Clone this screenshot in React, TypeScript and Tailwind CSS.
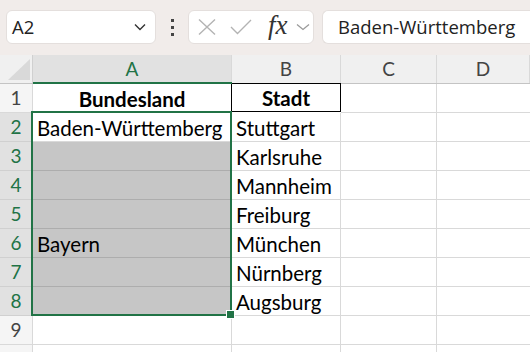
const cols = [
  { key: "A", w: "w-[199px]" },
  { key: "B", w: "w-[109px]" },
  { key: "C", w: "w-[96px]" },
  { key: "D", w: "flex-1" },
];

const rows: { n: number; a?: string; b?: string }[] = [
  { n: 1, a: "Bundesland", b: "Stadt" },
  { n: 2, a: "Baden-Württemberg", b: "Stuttgart" },
  { n: 3, b: "Karlsruhe" },
  { n: 4, b: "Mannheim" },
  { n: 5, b: "Freiburg" },
  { n: 6, a: "Bayern", b: "München" },
  { n: 7, b: "Nürnberg" },
  { n: 8, b: "Augsburg" },
  { n: 9 },
  { n: 10 },
];

const headFont = "font-['Lato','Liberation_Sans',sans-serif] text-[19px]";
const cellFont = "font-['Lato','Liberation_Sans',sans-serif] text-[20.5px] leading-[24px]";

function Toolbar() {
  return (
    <div className="h-[55px] bg-[#f1ecea] flex items-start pt-[10px] pl-[6px] font-['Open_Sans','Noto_Sans',sans-serif]">
      <div className="w-[150px] h-[34px] bg-white rounded-[6px] border border-[#e4dfdd] flex items-center justify-between pl-[5px] pr-[9px]">
        <span className="text-[18.5px] text-[#222]">A2</span>
        <svg viewBox="0 0 12 8" className="w-[12px] h-[8px]" fill="none" stroke="#333" strokeWidth={1.4}>
          <path d="M1 1.5l5 5 5-5" />
        </svg>
      </div>
      <div className="w-[32px] h-[34px] flex flex-col items-center justify-center gap-[4px]">
        <span className="w-[3px] h-[3px] bg-[#444]" />
        <span className="w-[3px] h-[3px] bg-[#444]" />
        <span className="w-[3px] h-[3px] bg-[#444]" />
      </div>
      <div className="w-[126px] h-[34px] bg-white rounded-[6px] border border-[#e4dfdd] flex items-center pl-[8px]">
        <svg viewBox="0 0 20 18" className="w-[20px] h-[18px]" fill="none" stroke="#b3b3b3" strokeWidth={1.4}>
          <path d="M2 1.5l16 15M18 1.5l-16 15" />
        </svg>
        <svg viewBox="0 0 22 16" className="w-[22px] h-[16px] ml-[13px]" fill="none" stroke="#b3b3b3" strokeWidth={1.4}>
          <path d="M1 8l6.5 6.5L21 1" />
        </svg>
        <span className="ml-[16px] text-[27px] leading-none italic text-[#333] font-['Liberation_Serif',serif] mt-[-3px]">fx</span>
        <svg viewBox="0 0 14 8" className="w-[14px] h-[8px] ml-[8px]" fill="none" stroke="#9a9a9a" strokeWidth={1.3}>
          <path d="M1 1.5l6 5 6-5" />
        </svg>
      </div>
      <div className="ml-[8px] flex-1 h-[34px] bg-white rounded-l-[6px] border border-r-0 border-[#e4dfdd] flex items-center pl-[15px]">
        <span className="text-[18.5px] text-[#222]">Baden-Württemberg</span>
      </div>
    </div>
  );
}

function HeaderRow() {
  return (
    <div className="flex h-[29px] bg-[#f0f0f0] border-b border-[#c4c4c4]">
      <div className="w-[33px] h-full border-r border-[#d0d0d0] relative">
        <svg viewBox="0 0 22 21" className="absolute left-[8px] top-[4px] w-[22px] h-[21px]">
          <path d="M22 0V21H0z" fill="#d9d9d9" />
        </svg>
      </div>
      {cols.map((c) => (
        <div
          key={c.key}
          className={`${c.w} h-full border-r border-[#d9d9d9] flex items-center justify-center ${headFont} ${
            c.key === "A" ? "bg-[#e1e1e1] text-[#217346]" : "text-[#444]"
          }`}
        >
          {c.key}
        </div>
      ))}
    </div>
  );
}

export default function App() {
  return (
    <div className="w-[530px] h-[352px] overflow-hidden bg-white">
      <Toolbar />
      <div className="relative">
        <HeaderRow />
        {rows.map((r) => {
          const selected = r.n >= 2 && r.n <= 8;
          const shaded = r.n >= 3 && r.n <= 8;
          const head = r.n === 1;
          return (
            <div key={r.n} className="flex h-[29px]">
              <div
                className={`w-[33px] h-full border-r border-b flex items-center justify-center ${headFont} ${
                  selected
                    ? "bg-[#e1e1e1] text-[#217346] border-[#d0d0d0]"
                    : "bg-[#f5f5f5] text-[#444] border-[#d9d9d9]"
                }`}
              >
                {r.n < 10 ? r.n : ""}
              </div>
              <div
                className={`w-[199px] h-full border-r border-b flex items-end pb-[1px] ${cellFont} text-black ${
                  head ? "justify-center font-bold border-r-black" : "pl-[4px]"
                } ${shaded ? "bg-[#c6c6c6] border-[#adadad]" : "border-[#d9d9d9]"} ${head ? "border-b-[#d9d9d9]" : ""}`}
              >
                {r.a}
              </div>
              <div
                className={`w-[109px] h-full border-r border-b flex items-end pb-[1px] ${cellFont} text-black ${
                  head ? "justify-center font-bold border-black border-t mt-[-1px] h-[30px]" : "pl-[4px] border-[#d9d9d9]"
                }`}
              >
                {r.b}
              </div>
              <div className="w-[96px] h-full border-r border-b border-[#d9d9d9]" />
              <div className="flex-1 h-full border-b border-[#d9d9d9]" />
            </div>
          );
        })}
        {/* green underline of the selected column header */}
        <div className="absolute left-[33px] top-[27px] w-[199px] h-[2px] bg-[#217346]" />
        {/* selection range A2:A8 */}
        <div className="absolute left-[31px] top-[56px] w-[201px] h-[205px] border-2 border-[#217346]" />
        <div className="absolute left-[227px] top-[256px] w-[7px] h-[7px] bg-[#217346] outline outline-1 outline-white" />
      </div>
    </div>
  );
}
